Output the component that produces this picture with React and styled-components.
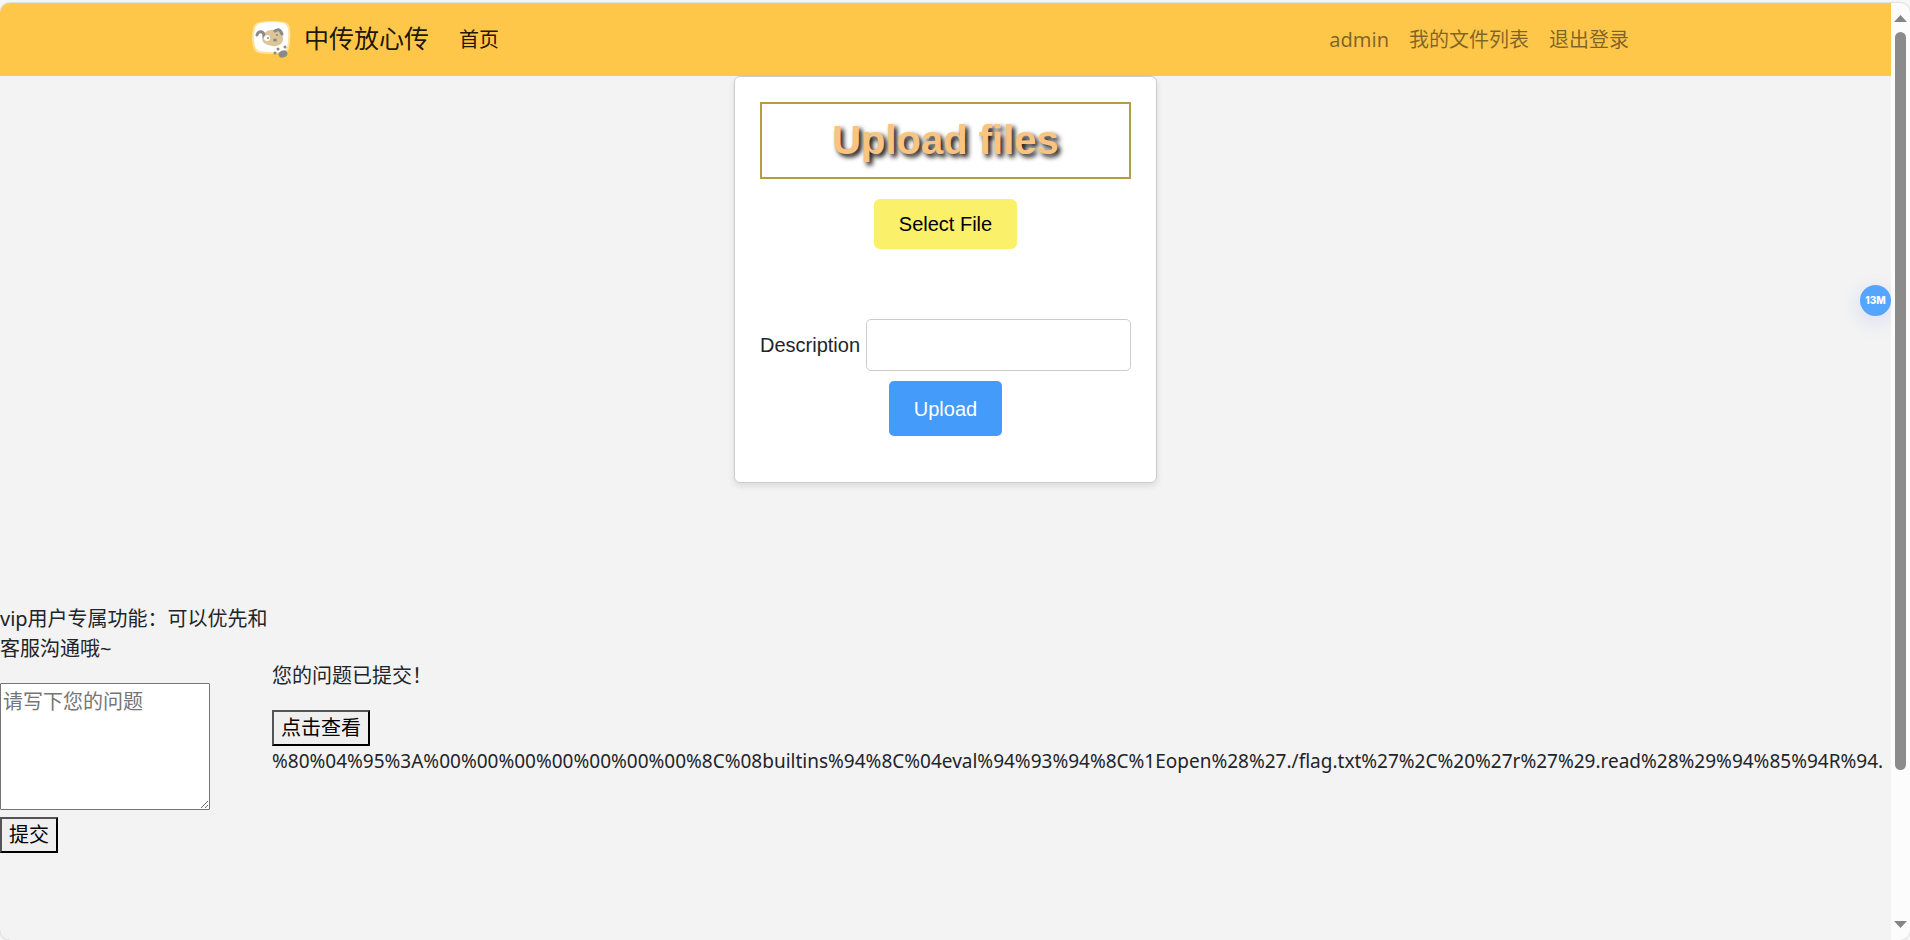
import React from "react";
import styled, { createGlobalStyle } from "styled-components";

const GlobalStyle = createGlobalStyle`
  *, *::before, *::after { box-sizing: border-box; }
  html, body { margin: 0; padding: 0; }
  body {
    background: #f7f7f7;
    color: #212529;
    font-family: "Noto Sans", "Noto Sans CJK SC", sans-serif;
    font-size: 20px;
    line-height: 30px;
  }
  p { margin: 0; }
`;

const Window = styled.div`
  display: flex;
  min-height: calc(100vh - 3px);
  margin-top: 3px;
  border-radius: 10px;
  overflow: hidden;
  background: #f3f3f3;
  box-shadow: 0 0 2px #aaa;
`;

const Content = styled.div`
  position: relative;
  flex: 1;
  min-width: 0;
  overflow: hidden;
`;

const Navbar = styled.nav`
  background: #fec74a;
`;

const NavContainer = styled.div`
  display: flex;
  align-items: center;
  max-width: 1425px;
  min-height: 73px;
  margin: 0 auto;
  padding: 0 19px;
`;

const Brand = styled.a`
  display: flex;
  align-items: center;
  gap: 13px;
  margin-right: 20px;
  color: rgba(0, 0, 0, 0.9);
  font-size: 25px;
  text-decoration: none;
`;

const BrandName = styled.span`
  padding-bottom: 4px;
`;

const NavLink = styled.a`
  padding: 11px 10px 10px;
  color: ${(p) => (p.$active ? "rgba(0, 0, 0, 0.9)" : "rgba(0, 0, 0, 0.5)")};
  text-decoration: none;
`;

const NavEnd = styled.div`
  display: flex;
  margin-left: auto;
`;

const Card = styled.form`
  width: 423px;
  max-width: 100%;
  margin: 0 auto;
  padding: 25px 25px 46px;
  display: flex;
  flex-direction: column;
  align-items: center;
  background: #fff;
  border: 1px solid #ccc;
  border-radius: 6px;
  box-shadow: 0 3px 6px rgba(0, 0, 0, 0.1);
  font-family: "Liberation Sans", Arial, sans-serif;
`;

const Title = styled.h1`
  align-self: stretch;
  margin: 0 0 20px;
  padding: 12px 0;
  border: 2px solid #b89b45;
  color: #fac382;
  font-size: 40px;
  font-weight: 700;
  line-height: 49px;
  text-align: center;
  text-shadow: 3px 3px 5px #000;
`;

const CardButton = styled.button`
  height: ${(p) => (p.$primary ? "55px" : "50px")};
  padding: 0 25px;
  border: 0;
  border-radius: ${(p) => (p.$primary ? "5px" : "6px")};
  background: ${(p) => (p.$primary ? "#449bfa" : "#fbf069")};
  color: ${(p) => (p.$primary ? "#fff" : "#000")};
  font: inherit;
`;

const Field = styled.div`
  display: flex;
  align-items: center;
  align-self: stretch;
  gap: 6px;
  margin: 70px 0 10px;
`;

const TextInput = styled.input`
  flex: 1;
  min-width: 0;
  height: 52px;
  padding: 12px;
  border: 1px solid #ccc;
  border-radius: 5px;
  background: #fff;
  font: inherit;
`;

const Support = styled.section`
  display: flex;
  margin-top: 121px;
`;

const Ask = styled.form`
  flex: 0 0 272px;
  display: flex;
  flex-direction: column;
  align-items: flex-start;
`;

const Question = styled.textarea`
  width: 210px;
  height: 127px;
  margin: 19px 0 7px;
  padding: 3px 2px;
  border: 1px solid #767676;
  border-radius: 1px;
  font: inherit;
  &::placeholder { color: #757575; }
`;

const PlainButton = styled.button`
  padding: 1px 7px;
  border: 2px outset #000;
  border-radius: 0;
  background: #efefef;
  color: #000;
  font: inherit;
`;

const Answer = styled.div`
  flex: 1;
  min-width: 0;
  padding-top: 57px;
`;

const Status = styled.p`
  margin-bottom: 19px;
`;

const Payload = styled.p`
  font-size: 19px;
  white-space: nowrap;
`;

const MemoryBadge = styled.div`
  position: absolute;
  top: 282px;
  right: 0;
  width: 31px;
  height: 31px;
  border-radius: 50%;
  background: #55a5ff;
  box-shadow: 0 5px 20px rgba(80, 110, 255, 0.18);
  color: #fff;
  font-family: Inter, sans-serif;
  font-size: 10px;
  font-weight: 800;
  line-height: 31px;
  text-align: center;
`;

const Scrollbar = styled.aside`
  flex: 0 0 19px;
  display: flex;
  flex-direction: column;
  align-items: center;
  padding: 11px 0;
  background: #fcfcfc;
`;

const Track = styled.div`
  flex: 1;
  width: 11px;
  margin: 10px 0;
`;

const Thumb = styled.div`
  height: 84%;
  border-radius: 6px;
  background: #8b8b8b;
`;

function Logo() {
  return (
    <svg width="39" height="38" viewBox="0 0 39 38" aria-hidden="true">
      <path d="M8 1Q20-1 32 1Q37 2 38 8Q39 18 37 27Q36 32 31 32Q18 34 7 32Q2 31 1 25Q-1 16 1 8Q2 2 8 1Z" fill="#ffe39c" />
      <path d="M9 2Q20 0 31 2Q35 3 36 8Q37 18 35 26Q34 30 30 31Q19 32 8 30Q4 29 3 25Q1 16 3 8Q4 3 9 2Z" fill="#fff" />
      <path d="M12 12Q19 6 28 11Q34 17 29 23Q21 28 12 22Q8 17 12 12Z" fill="#dcc597" />
      <path d="M5 14Q6 10 10 11Q12 12 12 15" fill="none" stroke="#88898b" strokeWidth="3" strokeLinecap="round" />
      <path d="M23 10Q27 7 29 11L30 13" fill="none" stroke="#88898b" strokeWidth="3" strokeLinecap="round" />
      <circle cx="15" cy="17" r="3" fill="#fff" />
      <circle cx="16" cy="17" r="1" fill="#88898b" />
      <ellipse cx="23" cy="19" rx="2" ry="1.5" fill="#88898b" />
      <circle cx="25" cy="14" r="1" fill="#88898b" />
      <circle cx="26" cy="28" r="1.5" fill="#88898b" />
      <circle cx="33" cy="26" r="1.5" fill="#88898b" />
      <circle cx="23" cy="32" r="1.5" fill="#88898b" />
      <ellipse cx="31" cy="33" rx="4.5" ry="3.5" transform="rotate(-20 31 33)" fill="#88898b" />
    </svg>
  );
}

function Arrow({ down }) {
  return (
    <svg width="13" height="8" viewBox="0 0 13 8" aria-hidden="true">
      <path d={down ? "M0 0H13L6.5 7Z" : "M0 8H13L6.5 1Z"} fill="#858585" />
    </svg>
  );
}

export default function App() {
  return (
    <>
      <GlobalStyle />
      <Window>
        <Content>
          <Navbar>
            <NavContainer>
              <Brand href="#">
                <Logo />
                <BrandName>中传放心传</BrandName>
              </Brand>
              <NavLink href="#" $active>首页</NavLink>
              <NavEnd>
                <NavLink href="#">admin</NavLink>
                <NavLink href="#">我的文件列表</NavLink>
                <NavLink href="#">退出登录</NavLink>
              </NavEnd>
            </NavContainer>
          </Navbar>
          <Card>
            <Title>Upload files</Title>
            <CardButton type="button">Select File</CardButton>
            <Field>
              <label htmlFor="description">Description</label>
              <TextInput id="description" type="text" />
            </Field>
            <CardButton type="button" $primary>Upload</CardButton>
          </Card>
          <Support>
            <Ask>
              <label htmlFor="question">vip用户专属功能：可以优先和客服沟通哦~</label>
              <Question id="question" placeholder="请写下您的问题" />
              <PlainButton type="button">提交</PlainButton>
            </Ask>
            <Answer>
              <Status>您的问题已提交！</Status>
              <PlainButton type="button">点击查看</PlainButton>
              <Payload>
                %80%04%95%3A%00%00%00%00%00%00%00%8C%08builtins%94%8C%04eval%94%93%94%8C%1Eopen%28%27./flag.txt%27%2C%20%27r%27%29.read%28%29%94%85%94R%94.
              </Payload>
            </Answer>
          </Support>
          <MemoryBadge>13M</MemoryBadge>
        </Content>
        <Scrollbar aria-hidden="true">
          <Arrow />
          <Track>
            <Thumb />
          </Track>
          <Arrow down />
        </Scrollbar>
      </Window>
    </>
  );
}
